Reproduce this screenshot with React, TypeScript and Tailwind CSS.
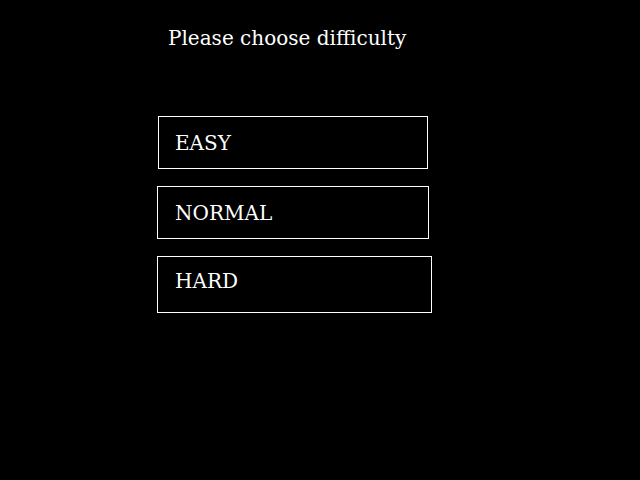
const options = [
  { label: "EASY", box: "ml-px w-[270px] h-[53px] pt-[14px] pl-[16px]" },
  { label: "NORMAL", box: "w-[272px] h-[53px] pt-[14px] pl-[17px]" },
  { label: "HARD", box: "w-[275px] h-[57px] pt-[12px] pl-[17px]" },
];

const App = () => {
  return (
    <div className="w-[640px] h-[480px] bg-black text-white font-['DejaVu_Serif',serif] pl-[157px]">
      <h1 className="pl-[11px] pt-[24px] text-[20px] leading-[28px] font-normal">
        Please choose difficulty
      </h1>
      <div className="mt-[64px] flex flex-col gap-[17px]">
        {options.map((o) => (
          <button
            key={o.label}
            className={`flex items-start border border-white text-[20px] leading-[24px] text-left ${o.box}`}
          >
            {o.label}
          </button>
        ))}
      </div>
    </div>
  );
};

export default App;
